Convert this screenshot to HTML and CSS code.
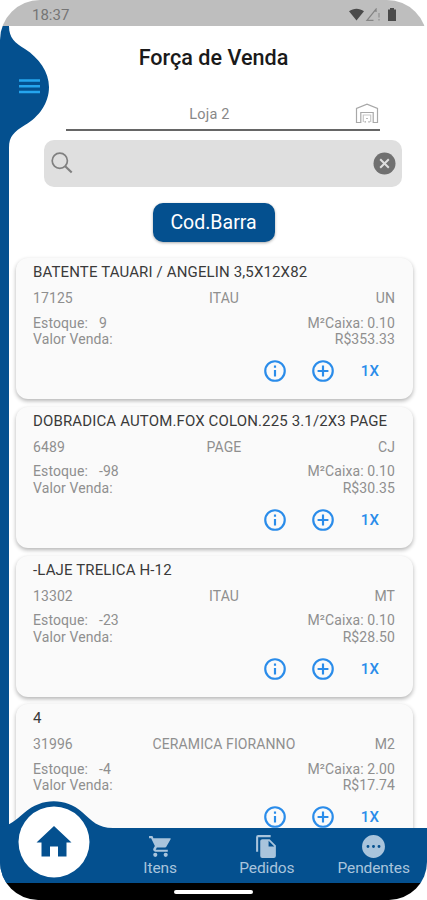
FILE: index.html
```html
<!DOCTYPE html>
<html lang="pt-BR">
<head>
<meta charset="utf-8">
<meta name="viewport" content="width=device-width, initial-scale=1">
<title>Força de Venda</title>
<link rel="stylesheet" href="styles.css">
</head>
<body>
<svg class="defs" width="0" height="0" aria-hidden="true">
  <symbol id="info" viewBox="0 0 24 24"><path d="M11 7h2v2h-2zm0 4h2v6h-2zm1-9a10 10 0 1 0 0 20 10 10 0 0 0 0-20zm0 18a8 8 0 1 1 0-16 8 8 0 0 1 0 16z"/></symbol>
  <symbol id="add" viewBox="0 0 24 24"><path d="M13 7h-2v4H7v2h4v4h2v-4h4v-2h-4zm-1-5a10 10 0 1 0 0 20 10 10 0 0 0 0-20zm0 18a8 8 0 1 1 0-16 8 8 0 0 1 0 16z"/></symbol>
</svg>
<div class="phone">
  <div class="status">
    <span class="clock">18:37</span>
    <svg class="signals" width="50" height="14" viewBox="0 0 50 14">
      <path fill="#4a4a4a" d="M0 3.2C4.5-.2 10.500-.2 15 3.200L7.500 12.500z"/>
      <path fill="none" stroke="#858585" stroke-width="1.300" d="M27 4V1.200L18 12.400h6.500"/>
      <path fill="none" stroke="#999" stroke-width="1.500" d="M30 5v4.500M30 11v1.500"/>
      <path fill="#4a4a4a" d="M39 1.500h2V0h4v1.500h2V13h-8z"/>
    </svg>
  </div>
  <svg class="side" width="50" height="802" viewBox="0 0 50 802">
    <path fill="#04508f" d="M0 0H9C9 12 15 17 25 23C39 32 49 46 49 61C49 77 39 91 25 99C14 106 9 110 9 122V802H0z"/>
    <path stroke="#25a5ee" stroke-width="2.500" d="M19 54.500h21M19 60.200h21M19 66h21"/>
  </svg>
  <main>
    <h1>Força de Venda</h1>
    <div class="store">
      <span>Loja 2</span>
      <svg class="house" width="24" height="21" viewBox="0 0 24 21"><g fill="none" stroke="#a8a8a8" stroke-width="1.200"><path d="M1.500 19.500V5.500L12 1.200l10.500 4.300v14h-4.300V9.500H5.800v10z"/><path d="M8.300 19v-7h7.400v7" stroke="#c8c8c8"/><path d="M11.200 15.500h1.600M9.500 18.800h1.500M13.300 18.800h1.500"/></g></svg>
    </div>
    <div class="search">
      <svg width="22" height="22" viewBox="0 0 22 22"><g fill="none" stroke="#808080" stroke-width="1.700"><circle cx="8.800" cy="8.800" r="7.600"/><path d="M14.200 14.200l6.500 6.300" stroke-width="2.200"/></g></svg>
      <svg width="23" height="23" viewBox="0 0 23 23"><circle cx="11.500" cy="11.500" r="11" fill="#707070"/><path stroke="#dedede" stroke-width="2" d="M7.200 7.200l8.600 8.600M15.800 7.200l-8.600 8.600"/></svg>
    </div>
    <button class="scan">Cod.Barra</button>
    <div class="list">
      <article class="card">
        <h2>BATENTE TAUARI / ANGELIN 3,5X12X82</h2>
        <div class="meta"><span>17125</span><span>ITAU</span><span>UN</span></div>
        <div class="row"><span>Estoque:<b>9</b></span><span>M²Caixa: 0.10</span></div>
        <div class="row"><span>Valor Venda:</span><span class="price">R$353.33</span></div>
        <div class="actions"><svg><use href="#info"/></svg><svg><use href="#add"/></svg><span>1X</span></div>
      </article>
      <article class="card">
        <h2>DOBRADICA AUTOM.FOX COLON.225 3.1/2X3 PAGE</h2>
        <div class="meta"><span>6489</span><span>PAGE</span><span>CJ</span></div>
        <div class="row"><span>Estoque:<b>-98</b></span><span>M²Caixa: 0.10</span></div>
        <div class="row"><span>Valor Venda:</span><span class="price">R$30.35</span></div>
        <div class="actions"><svg><use href="#info"/></svg><svg><use href="#add"/></svg><span>1X</span></div>
      </article>
      <article class="card">
        <h2>-LAJE TRELICA H-12</h2>
        <div class="meta"><span>13302</span><span>ITAU</span><span>MT</span></div>
        <div class="row"><span>Estoque:<b>-23</b></span><span>M²Caixa: 0.10</span></div>
        <div class="row"><span>Valor Venda:</span><span class="price">R$28.50</span></div>
        <div class="actions"><svg><use href="#info"/></svg><svg><use href="#add"/></svg><span>1X</span></div>
      </article>
      <article class="card">
        <h2>4</h2>
        <div class="meta"><span>31996</span><span>CERAMICA FIORANNO</span><span>M2</span></div>
        <div class="row"><span>Estoque:<b>-4</b></span><span>M²Caixa: 2.00</span></div>
        <div class="row"><span>Valor Venda:</span><span class="price">R$17.74</span></div>
        <div class="actions"><svg><use href="#info"/></svg><svg><use href="#add"/></svg><span>1X</span></div>
      </article>
    </div>
  </main>
  <nav>
    <svg class="bump" width="125" height="82" viewBox="0 0 125 82">
      <path fill="#04508f" d="M0 26C9 25 16 19 24 12C42-4 66-3 82 11C92 20 98 27 113 27H125V82H0z"/>
      <circle cx="54" cy="41" r="35.500" fill="#fff"/>
      <path fill="#04508f" d="M54 25L36.500 41.500H41.500V55.500H50V45.500H58V55.500H66.500V41.500H71.500z"/>
    </svg>
    <a class="home" aria-label="Início"></a>
    <a class="tab"><svg viewBox="0 0 24 24"><path d="M7 18a2 2 0 1 0 0 4 2 2 0 0 0 0-4zM1 2v2h2l3.600 7.600L5.200 14c-.7 1.300.2 3 1.800 3h12v-2H7.400l1.100-2h7.500c.7 0 1.400-.4 1.700-1L21.700 5c.4-.5-.1-1-.7-1H5.200l-.9-2zM17 18a2 2 0 1 0 0 4 2 2 0 0 0 0-4z"/></svg><span>Itens</span></a>
    <a class="tab"><svg viewBox="0 0 24 24"><path d="M16 1H4a2 2 0 0 0-2 2v14h2V3h12zm-1 4l6 6v10a2 2 0 0 1-2 2H8a2 2 0 0 1-2-2V7c0-1.100.9-2 2-2zm-1 7h5.500L14 6.500z"/></svg><span>Pedidos</span></a>
    <a class="tab"><svg viewBox="0 0 24 24"><path fill-rule="evenodd" d="M12 1a11 11 0 1 0 0 22 11 11 0 0 0 0-22zM6.700 10.600a1.400 1.400 0 1 1 0 2.800 1.400 1.400 0 0 1 0-2.800zm5.300 0a1.400 1.400 0 1 1 0 2.800 1.400 1.400 0 0 1 0-2.800zm5.300 0a1.400 1.400 0 1 1 0 2.800 1.400 1.400 0 0 1 0-2.800z"/></svg><span>Pendentes</span></a>
  </nav>
  <footer><i></i></footer>
</div>
</body>
</html>
```
FILE: styles.css
```css
* { box-sizing: border-box; }
body { margin: 0; background: #fff; font-family: Roboto, sans-serif; }
.defs { position: absolute; }
.phone {
  position: relative;
  display: flex;
  flex-direction: column;
  width: 427px;
  height: 900px;
  overflow: hidden;
  background: #fff;
  border-radius: 40px 40px 38px 38px;
}
.status {
  flex: none;
  display: flex;
  justify-content: space-between;
  align-items: center;
  height: 26px;
  padding: 4px 19px 0 32px;
  background: #bebebe;
  color: #757575;
}
.clock { font-size: 15px; letter-spacing: 0; }
.signals { margin-right: 9px; }
.side { position: absolute; left: 0; top: 26px; }
main {
  flex: 1;
  min-height: 0;
  overflow: hidden;
  display: flex;
  flex-direction: column;
  align-items: center;
  padding-top: 18px;
}
h1 { flex: none; margin: 0; font-size: 21.600px; line-height: 28px; font-weight: 500; color: #1a1a1a; }
.store {
  position: relative;
  flex: none;
  display: flex;
  align-items: center;
  justify-content: center;
  width: 314px;
  height: 33px;
  margin: 26px 0 0 18px;
  padding: 2px 26px 0 0;
  border-bottom: 2px solid #666;
  color: #888;
  font-size: 14.500px;
  letter-spacing: .2px;
}
.house { position: absolute; right: 1px; top: 5px; }
.search {
  flex: none;
  display: flex;
  align-items: center;
  justify-content: space-between;
  width: 358px;
  height: 47.500px;
  margin: 8.500px 0 0 18px;
  padding: 0 6px 0 7px;
  border-radius: 10px;
  background: #dfdfdf;
}
.scan {
  flex: none;
  width: 122px;
  height: 39px;
  margin-top: 15.500px;
  padding: 1px 0 0;
  border: 0;
  border-radius: 10px;
  background: #04508f;
  box-shadow: 0 1px 3px #0005;
  color: #fff;
  font: 19.500px Roboto, sans-serif;
}
.list { flex: none; width: 100%; padding: 16.700px 14px 0 16px; }
.card {
  height: 141.200px;
  margin-bottom: 7.500px;
  padding: 4px 18px 0 17px;
  border-radius: 12px;
  background: #fafafa;
  box-shadow: 0 2px 4px #0000004d;
  color: #8f8f8f;
  font-size: 14px;
  letter-spacing: .1px;
}
h2 { margin: 0; font-size: 15px; line-height: 21px; font-weight: 400; color: #3a3a3a; white-space: nowrap; letter-spacing: .14px; }
.meta { display: grid; grid-template-columns: 90px 1fr 70px; height: 29px; line-height: 30px; text-align: center; }
.meta span:first-child { text-align: left; }
.meta span:last-child { text-align: right; }
.row { display: flex; justify-content: space-between; height: 16.500px; line-height: 16.500px; }
.meta + .row { margin-top: 2.500px; }
b { margin-left: 11px; font-weight: 400; }
.actions { display: flex; align-items: center; justify-content: flex-end; margin: 10.500px 0 0; height: 26px; padding-right: 16px; gap: 22px; color: #2a8cea; }
.actions svg { width: 26px; height: 26px; fill: #2a8cea; }
.actions span { width: 21px; font-size: 15px; font-weight: 500; text-align: right; }
nav {
  position: relative;
  flex: none;
  display: grid;
  grid-template-columns: repeat(4, 106.750px);
  height: 55px;
  background: #04508f;
}
.bump { position: absolute; left: 0; top: -27px; }
.tab { display: flex; flex-direction: column; align-items: center; padding-top: 6px; color: #a9c4dc; font-size: 15.500px; line-height: 19px; letter-spacing: -.1px; }
.tab svg { width: 25px; height: 25px; fill: #a9c4dc; }
footer { flex: none; height: 17px; background: #000; display: flex; justify-content: center; padding-top: 7px; }
footer i { width: 79px; height: 4px; border-radius: 2px; background: #fff; }
```
